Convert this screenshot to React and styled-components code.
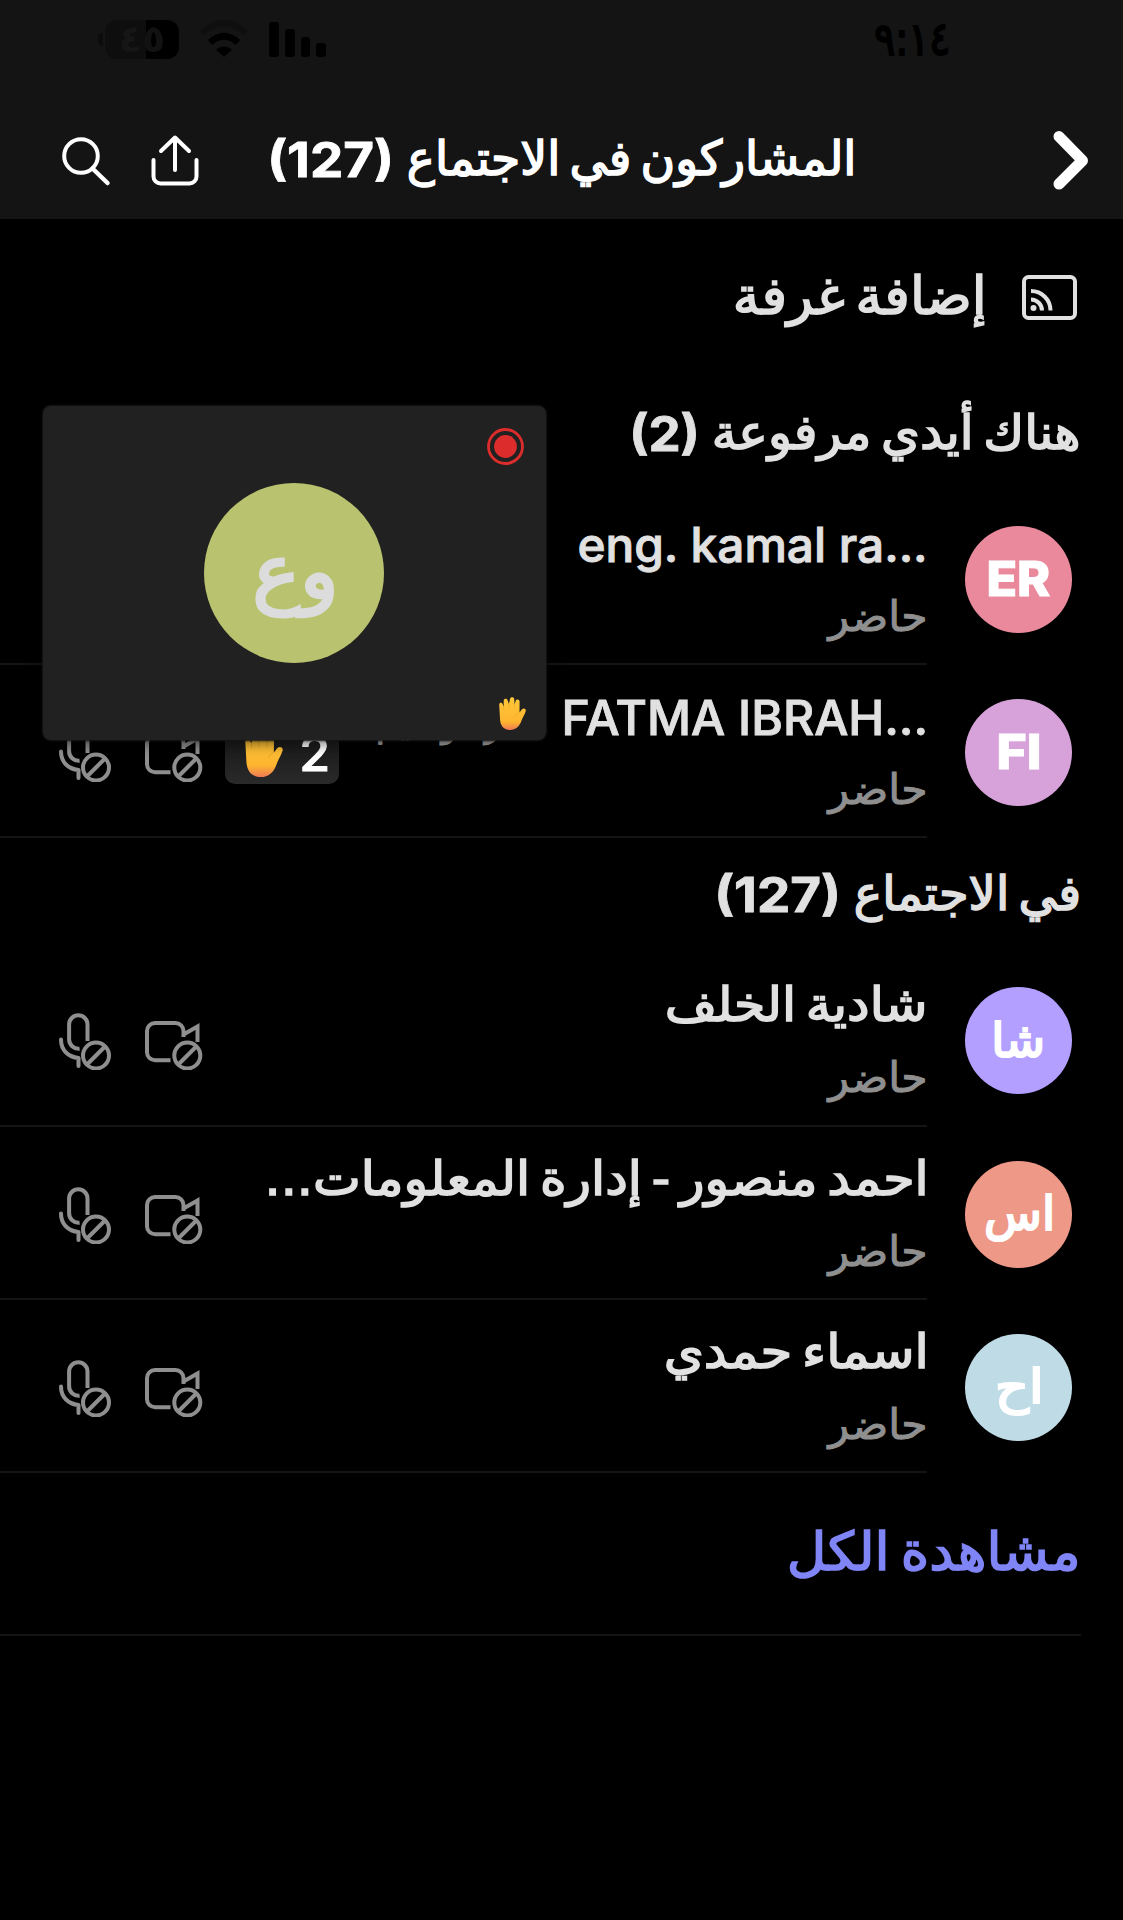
import React, { useLayoutEffect, useRef, useState } from 'react';
import styled, { createGlobalStyle } from 'styled-components';

const Global = createGlobalStyle`
  body { margin: 0; background: #000; }
  * { box-sizing: border-box; }
`;

const latin = "Inter, 'Liberation Sans', sans-serif";
const arabic = "'DejaVu Sans', sans-serif";

const Page = styled.div`
  position: relative;
  direction: rtl;
  width: 1123px;
  height: 1920px;
  background: #000;
  overflow: hidden;
  font-family: ${latin};
`;

const Box = styled.span`
  display: block;
  flex: none;
  width: ${(p) => p.$w}px;
  height: 60px;
  line-height: 60px;
  white-space: nowrap;
  direction: ltr;
  text-align: left;
  margin-top: ${(p) => p.$dy || 0}px;
  margin-bottom: ${(p) => -(p.$dy || 0)}px;
  color: ${(p) => p.$color || '#e1e1e1'};
  font-family: ${(p) => (p.$ltr ? latin : arabic)};
  font-size: ${(p) => p.$size || 48}px;
  font-weight: ${(p) => p.$weight || 400};
  word-spacing: ${(p) => (p.$ltr ? 0 : -6)}px;
  -webkit-text-stroke: ${(p) => p.$stroke || 0}px currentColor;
`;

const Ink = styled.span`
  display: inline-block;
  direction: ${(p) => (p.$ltr ? 'ltr' : 'rtl')};
  transform-origin: left center;
`;

// Scales a line of text horizontally so that its glyphs, outline included, span w pixels.
function Text({ w, children, ...rest }) {
  const ref = useRef(null);
  const [fit, setFit] = useState({ scale: 1, shift: 0 });
  const stroke = rest.$stroke || 0;
  useLayoutEffect(() => {
    const style = getComputedStyle(ref.current);
    const ctx = document.createElement('canvas').getContext('2d');
    ctx.font = `${style.fontWeight} ${style.fontSize} ${style.fontFamily}`;
    ctx.direction = style.direction;
    ctx.textAlign = 'left';
    ctx.wordSpacing = style.wordSpacing;
    const m = ctx.measureText(children);
    const left = m.actualBoundingBoxLeft + stroke / 2;
    const scale = w / (left + m.actualBoundingBoxRight + stroke / 2);
    setFit({ scale, shift: left * scale });
  }, [w, children, stroke]);
  return (
    <Box $w={w} {...rest}>
      <Ink ref={ref} $ltr={rest.$ltr} style={{ transform: `translateX(${fit.shift}px) scaleX(${fit.scale})` }}>
        {children}
      </Ink>
    </Box>
  );
}

const Header = styled.header`
  height: 219px;
  background: #141414;
`;

const StatusBar = styled.div`
  display: flex;
  justify-content: space-between;
  align-items: center;
  height: 78px;
  padding: 0 175px 0 98px;
`;

const StatusIcons = styled.div`
  display: flex;
  direction: ltr;
  align-items: center;
  gap: 21px;
`;

const Battery = styled.div`
  display: flex;
  align-items: center;
  gap: 2px;
`;

const BatteryBody = styled.div`
  display: flex;
  align-items: center;
  justify-content: center;
  width: 74px;
  height: 39px;
  border-radius: 12px;
  background: linear-gradient(90deg, #0e0e0e 55%, #000 55%);
`;

const BatteryTip = styled.i`
  width: 5px;
  height: 13px;
  border-radius: 6px 0 0 6px;
  background: #0c0c0c;
`;

const BatteryText = styled.span`
  font: 700 38px/39px ${arabic};
  background: linear-gradient(90deg, #161616 50%, #121212 50%);
  background-clip: text;
  -webkit-background-clip: text;
  color: transparent;
`;

const Bars = styled.div`
  display: flex;
  align-items: flex-end;
  gap: 6px;
`;

const Bar = styled.i`
  width: 9.8px;
  height: ${(p) => p.$h}px;
  border-radius: 3px;
  background: #000;
`;

const Nav = styled.nav`
  display: flex;
  align-items: center;
  height: 141px;
  padding: 22px 34px 0 61px;
`;

const Title = styled.div`
  display: flex;
  gap: 17px;
  margin-right: 200px;
`;

const NavIcons = styled.div`
  display: flex;
  direction: ltr;
  align-items: center;
  gap: 39px;
  margin-right: auto;
`;

const AddRoom = styled.div`
  display: flex;
  align-items: center;
  gap: 37px;
  height: 158px;
  padding: 0 46px 1px 0;
`;

const SectionTitle = styled.h2`
  display: flex;
  align-items: center;
  gap: 17px;
  height: 115px;
  margin: 0;
  padding-right: 44px;
  font-weight: inherit;
`;

const Row = styled.div`
  display: flex;
  height: 173.2px;
  padding: 0 51px 0 0;
`;

const Avatar = styled.div`
  display: flex;
  flex: none;
  justify-content: center;
  align-items: center;
  width: ${(p) => p.$d || 107}px;
  height: ${(p) => p.$d || 107}px;
  margin: ${(p) => (p.$d ? '0 1px 0 0' : '34px 0 0 38px')};
  border-radius: 50%;
  background: ${(p) => p.$bg};
`;

const RowBody = styled.div`
  display: flex;
  width: 927px;
  border-bottom: 2px solid #141414;
  padding-left: 58px;
`;

const Names = styled.div`
  display: flex;
  flex-direction: column;
  padding: 21px 2px 0 0;
`;

const NameLine = styled.div`
  display: flex;
  gap: ${(p) => p.$gap || 0}px;
  height: 73px;
`;

const RowIcons = styled.div`
  display: flex;
  direction: ltr;
  align-items: flex-start;
  margin-right: auto;
  padding-top: 59px;
  gap: 34px;
`;

const HandBadge = styled.div`
  display: flex;
  align-items: center;
  gap: 19px;
  width: 114px;
  height: 60px;
  padding-left: 20px;
  margin: 0 0 0 -13px;
  border-radius: 10px;
  background: linear-gradient(#1c1c1c 40%, #2a2a2a);
`;

const Footer = styled.div`
  display: flex;
  align-items: center;
  height: 163px;
  margin-right: 42px;
  padding-right: 3px;
  border-bottom: 2px solid #141414;
`;

const Pip = styled.div`
  position: absolute;
  left: 43px;
  top: 406px;
  display: flex;
  justify-content: center;
  align-items: center;
  width: 503px;
  height: 334px;
  border-radius: 8px;
  background: #212121;
  box-shadow: 0 0 2px 1px #161616, 0 3px 14px rgba(0, 0, 0, 0.6);
`;

const Corner = styled.div`
  position: absolute;
  left: ${(p) => p.$x}px;
  top: ${(p) => p.$y}px;
  display: flex;
`;

const Hand = ({ w, h }) => (
  <svg width={w} height={h} viewBox="0 0 27 33" preserveAspectRatio="none">
    <defs>
      <linearGradient id="skin" x1="0" y1="0" x2="0" y2="1">
        <stop offset="0" stopColor="#ffc83a" />
        <stop offset="0.75" stopColor="#fdb52f" />
        <stop offset="1" stopColor="#ee7a55" />
      </linearGradient>
    </defs>
    <path
      fill="url(#skin)"
      d="M.2 7.500C.2 5.200 3.400 5.200 3.800 7.500L4.700 9 4.700 3.500C4.900 1.200 8.400 1.200 8.700 3.500L9.900 7 11 1.900C11.400-.5 15-.4 15.200 1.900L15.600 7.500 16.700 3.700C17.300 1.700 20.600 2.200 20.600 4.500L20.500 15.500 23 12.200C24.800 10.600 27.400 11.800 26.700 14.200 25.400 18.200 23.600 20.400 22.500 23.600 20.500 29.800 16.500 33 11.300 33 5 33 1.400 29.300 1 22Z"
    />
    <path d="M4.700 8.500v4M9.900 7v4.500M15.600 7.500v4M20.500 15.500c-2 .8-3.200 2-3.800 4" stroke="#eba526" strokeWidth=".7" fill="none" />
  </svg>
);

const MicOff = () => (
  <svg width="53" height="58" viewBox="58 1012 53 58" fill="none" stroke="#8f8f8f" strokeWidth="4">
    <path d="M87.500 1041V1024.500a9.200 9.200 0 0 0-18.400 0V1039a9.500 9.500 0 0 0 10.500 9.700" />
    <path d="M61 1039.500c0 11 7.500 17.500 17.500 18.500v8" strokeLinecap="round" strokeLinejoin="round" />
    <circle cx="96" cy="1055.500" r="13" />
    <path d="M87 1064.500L105 1046.500" />
  </svg>
);

const VideoOff = () => (
  <svg width="59" height="58" viewBox="145 1012 59 58" fill="none" stroke="#8f8f8f" strokeWidth="4">
    <path d="M170.500 1060.300H155a8 8 0 0 1-8-8V1031a8 8 0 0 1 8-8H175.500a8 8 0 0 1 8 8V1037M183.500 1034.500L197.500 1026.500V1042" />
    <circle cx="187.300" cy="1055.500" r="13" />
    <path d="M178.300 1064.500L196.300 1046.500" />
  </svg>
);

const Wifi = () => (
  <svg width="48" height="38" viewBox="0 0 48 38" fill="none">
    <path d="M2 13Q24-7 46 13" stroke="#0f0f0f" strokeWidth="6" />
    <path d="M10 22.500Q24 10 38 22.500" stroke="#000" strokeWidth="6.500" />
    <path d="M16 29.500Q24 23.500 32 29.500L24 37Z" fill="#000" />
  </svg>
);

const Search = () => (
  <svg width="51" height="54" viewBox="61 134 51 54" fill="none" stroke="#fff" strokeWidth="4">
    <circle cx="81" cy="157" r="16.800" />
    <path d="M92.500 169.500L107.500 184" strokeWidth="4.500" strokeLinecap="round" />
  </svg>
);

const Share = () => (
  <svg width="49" height="54" viewBox="151 134 49 54" fill="none" stroke="#fff" strokeWidth="4" strokeLinecap="round" strokeLinejoin="round">
    <path d="M153.500 161V177.500a7 7 0 0 0 7 7H189.500a7 7 0 0 0 7-7V161M175 171V138.500M161 152L175 138.500L189 152" />
  </svg>
);

const Chevron = () => (
  <svg width="36" height="60" viewBox="0 0 36 60" fill="none" stroke="#fff" strokeWidth="11" strokeLinecap="round" strokeLinejoin="round">
    <path d="M6 6.500L29.500 30.500L6 54" />
  </svg>
);

const Cast = () => (
  <svg width="55" height="45" viewBox="0 0 55 45" fill="none" stroke="#e1e1e1">
    <rect x="2" y="2" width="51" height="41" rx="4.500" strokeWidth="4" />
    <path d="M9 24.500a11 11 0 0 1 11 11M9 16a19.500 19.500 0 0 1 19.500 19.500" strokeWidth="4" />
    <circle cx="11.500" cy="33" r="3" fill="#e1e1e1" stroke="none" />
  </svg>
);

function Person({ bg, initials, name, badge }) {
  return (
    <Row>
      <Avatar $bg={bg}>{initials}</Avatar>
      <RowBody>
        <Names>
          {name}
          <Text w={99} $color="#8f8f8f" $size={42} $stroke={1} $dy={1}>حاضر</Text>
        </Names>
        <RowIcons>
          <MicOff />
          <VideoOff />
          {badge}
        </RowIcons>
      </RowBody>
    </Row>
  );
}

export default function App() {
  return (
    <Page>
      <Global />
      <Header>
        <StatusBar>
          <Text w={73} $color="#000" $size={46} $stroke={2}>٩:١٤</Text>
          <StatusIcons>
            <Battery>
              <BatteryTip />
              <BatteryBody><BatteryText>٤٥</BatteryText></BatteryBody>
            </Battery>
            <Wifi />
            <Bars><Bar $h={35} /><Bar $h={28} /><Bar $h={20} /><Bar $h={14} /></Bars>
          </StatusIcons>
        </StatusBar>
        <Nav>
          <Chevron />
          <Title>
            <Text w={445} $color="#fff" $stroke={1.6} $dy={-2}>المشاركون في الاجتماع</Text>
            <Text w={121} $ltr $color="#fff" $weight={700} $stroke={0.8} $dy={0.5}>(127)</Text>
          </Title>
          <NavIcons><Search /><Share /></NavIcons>
        </Nav>
      </Header>
      <AddRoom>
        <Cast />
        <Text w={250} $size={52} $stroke={1.6} $dy={-2}>إضافة غرفة</Text>
      </AddRoom>
      <SectionTitle>
        <Text w={365} $stroke={1.6} $dy={-3}>هناك أيدي مرفوعة</Text>
        <Text w={65} $ltr $weight={700} $stroke={0.8} $dy={-1}>(2)</Text>
      </SectionTitle>
      <Person
        bg="#e9899b"
        initials={<Text w={62} $ltr $color="#fff" $weight={800} $stroke={1} $dy={-1}>ER</Text>}
        name={<NameLine><Text w={346} $ltr $weight={500} $stroke={0.9} $dy={2}>eng. kamal ra...</Text></NameLine>}
      />
      <Person
        bg="#d7a1da"
        initials={<Text w={41} $ltr $color="#fff" $weight={800} $stroke={1} $dy={-1}>FI</Text>}
        name={
          <NameLine $gap={23}>
            <Text w={361} $ltr $weight={500} $stroke={0.9} $dy={2}>FATMA IBRAH...</Text>
            <Text w={163} $color="#a8a8a8" $stroke={1}>سارة وسيم</Text>
          </NameLine>
        }
        badge={
          <HandBadge>
            <Hand w={38} h={46} />
            <Text w={26} $ltr $color="#fff" $weight={500} $stroke={0.9}>2</Text>
          </HandBadge>
        }
      />
      <SectionTitle>
        <Text w={224} $stroke={1.6} $dy={-3}>في الاجتماع</Text>
        <Text w={121} $ltr $weight={700} $stroke={0.8} $dy={-1}>(127)</Text>
      </SectionTitle>
      <Person
        bg="#b39fff"
        initials={<Text w={49} $color="#fff" $stroke={2.2} $dy={-1}>شا</Text>}
        name={<NameLine><Text w={258} $stroke={1.6}>شادية الخلف</Text></NameLine>}
      />
      <Person
        bg="#ee9888"
        initials={<Text w={66} $color="#fff" $stroke={2.2} $dy={-1}>اس</Text>}
        name={<NameLine><Text w={656} $stroke={1.6}>احمد منصور - إدارة المعلومات...</Text></NameLine>}
      />
      <Person
        bg="#bfdbe5"
        initials={<Text w={43} $color="#fff" $stroke={2.2} $dy={-1}>اح</Text>}
        name={<NameLine><Text w={259} $stroke={1.6}>اسماء حمدي</Text></NameLine>}
      />
      <Footer>
        <Text w={289} $color="#8085f6" $size={53} $stroke={1.6} $dy={-1}>مشاهدة الكل</Text>
      </Footer>
      <Pip>
        <Avatar $d={180} $bg="#b9c36f">
          <Text w={79} $color="#dcdcdc" $size={76} $stroke={3} $dy={-1}>وع</Text>
        </Avatar>
        <Corner $x={444} $y={22}>
          <svg width="37" height="37" fill="none">
            <circle cx="18.500" cy="18.500" r="17" stroke="#dc2c2c" strokeWidth="2.800" />
            <circle cx="18.500" cy="18.500" r="11.400" fill="#dc2c2c" />
          </svg>
        </Corner>
        <Corner $x={456} $y={291}><Hand w={27} h={33} /></Corner>
      </Pip>
    </Page>
  );
}
